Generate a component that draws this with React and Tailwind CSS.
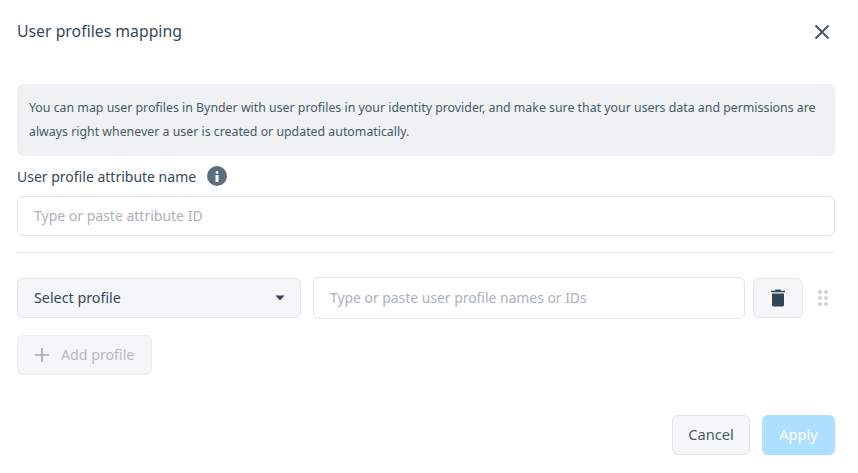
import React from "react";

const font = "font-['Noto_Sans','Liberation_Sans',sans-serif]";

const App = () => {
    return (
        <div className={`${font} w-[858px] h-[473px] bg-white pl-[17px] pr-[23px] overflow-hidden text-[#3e5463]`}>
            {/* Header */}
            <div className="h-[84px] pt-[19px] flex items-start justify-between">
                <h1 className="text-[15.8px] leading-6 font-normal text-[#34495a]">User profiles mapping</h1>
                <svg className="mt-[5px] mr-[5px]" width="16" height="16" viewBox="0 0 16 16" fill="none" stroke="#3e5463" strokeWidth="1.8">
                    <path d="M1.5 1.5 14.5 14.5M14.5 1.5 1.5 14.5" />
                </svg>
            </div>

            {/* Info */}
            <div className="h-[72px] rounded-md bg-[#f0f1f3] px-3 pt-[12px] text-[12.35px] leading-6 text-[#465a69] whitespace-nowrap">
                <p>You can map user profiles in Bynder with user profiles in your identity provider, and make sure that your users data and permissions are</p>
                <p>always right whenever a user is created or updated automatically.</p>
            </div>

            {/* Attribute name */}
            <div className="h-[40px] flex items-center gap-[11px] text-[14px] text-[#34495a]">
                <span>User profile attribute name</span>
                <span className="w-5 h-5 rounded-full bg-[#5b6f7e] flex items-center justify-center">
                    <svg width="4" height="11" viewBox="0 0 4 11" fill="#fff">
                        <circle cx="2" cy="1.4" r="1.4" />
                        <rect x="0.5" y="4" width="3" height="7" rx="0.4" />
                    </svg>
                </span>
            </div>
            <div className="h-10 rounded-md border border-[#e1e4e8] px-4 pb-[1px] flex items-center text-[14px] text-[#aab3ba]">
                Type or paste attribute ID
            </div>
            <div className="mt-4 border-t border-[#e6e8eb]"></div>

            {/* Profile row */}
            <div className="mt-6 flex items-center h-[42px]">
                <div className="w-[284px] h-10 rounded-md border border-[#e1e4e8] bg-[#f4f6f8] pl-4 pr-[15px] flex items-center justify-between text-[14.3px] text-[#34495a]">
                    <span>Select profile</span>
                    <svg width="10" height="6" viewBox="0 0 10 6" fill="#34495a">
                        <path d="M0.5 0.5h9L5 5.5z" />
                    </svg>
                </div>
                <div className="ml-3 w-[432px] h-[42px] rounded-md border border-[#e1e4e8] px-4 flex items-center text-[13.9px] text-[#aab3ba]">
                    Type or paste user profile names or IDs
                </div>
                <div className="ml-2 w-[50px] h-10 rounded-md border border-[#e6e8eb] bg-[#f4f6f8] flex items-center justify-center">
                    <svg width="14" height="18" viewBox="0 0 14 18" fill="#2f4659">
                        <path d="M4.5 0.5h5L10 1.8h4V3.2H0V1.8h4z" />
                        <path d="M1 4.5h12V16a1.6 1.6 0 0 1-1.6 1.6H2.6A1.6 1.6 0 0 1 1 16z" />
                    </svg>
                </div>
                <svg className="ml-[15px]" width="10" height="16" viewBox="0 0 10 16" fill="#ccd2d7">
                    <circle cx="2" cy="2" r="2" />
                    <circle cx="8" cy="2" r="2" />
                    <circle cx="2" cy="8" r="2" />
                    <circle cx="8" cy="8" r="2" />
                    <circle cx="2" cy="14" r="2" />
                    <circle cx="8" cy="14" r="2" />
                </svg>
            </div>

            {/* Add profile */}
            <div className="mt-4 w-[135px] h-10 rounded-md border border-[#eceef0] bg-[#f4f6f8] pl-4 flex items-center gap-[11px] text-[14.2px] text-[#b3bbc1]">
                <svg width="16" height="16" viewBox="0 0 16 16" stroke="#a3acb3" strokeWidth="1.7">
                    <path d="M8 1v14M1 8h14" />
                </svg>
                <span>Add profile</span>
            </div>

            {/* Footer */}
            <div className="mt-10 flex justify-end gap-3">
                <div className="w-[78px] h-10 rounded-md border border-[#e1e4e8] bg-[#f4f6f8] flex items-center justify-center text-[14.6px] text-[#465a69]">
                    Cancel
                </div>
                <div className="w-[73px] h-10 rounded-md bg-[#addfff] flex items-center justify-center text-[14.6px] text-white">
                    Apply
                </div>
            </div>
        </div>
    );
};

export default App;
